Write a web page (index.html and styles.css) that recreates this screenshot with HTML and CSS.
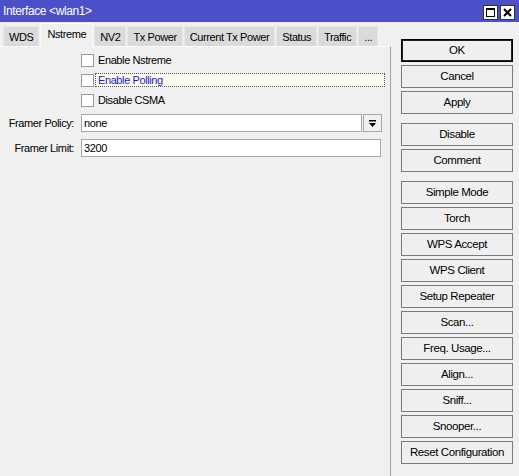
FILE: index.html
```html
<!DOCTYPE html>
<html>
<head>
<meta charset="utf-8">
<link rel="stylesheet" href="styles.css">
</head>
<body>
<div class="window">
  <div class="titlebar">
    <span class="title">Interface &lt;wlan1&gt;</span>
    <div class="winbtns">
      <span class="wbtn"><svg width="13" height="13" viewBox="0 0 13 13"><rect x="2.5" y="2.5" width="8" height="8" fill="none" stroke="#000" stroke-width="1"/><rect x="2" y="2" width="9" height="2" fill="#000"/></svg></span>
      <span class="wbtn"><svg width="13" height="13" viewBox="0 0 13 13"><path d="M3 3 L10 10 M10 3 L3 10" stroke="#000" stroke-width="2"/></svg></span>
    </div>
  </div>
  <div class="main">
    <div class="left">
      <div class="tabs">
        <span class="tab">WDS</span>
        <span class="tab active">Nstreme</span>
        <span class="tab">NV2</span>
        <span class="tab">Tx Power</span>
        <span class="tab">Current Tx Power</span>
        <span class="tab">Status</span>
        <span class="tab">Traffic</span>
        <span class="tab">...</span>
      </div>
      <div class="panel">
        <div class="checks">
          <div class="crow"><span class="cb"></span><span class="clabel">Enable Nstreme</span></div>
          <div class="crow"><span class="cb"></span><span class="clabel focus">Enable Polling</span></div>
          <div class="crow"><span class="cb"></span><span class="clabel">Disable CSMA</span></div>
        </div>
        <div class="fields">
          <div class="frow">
            <span class="flabel">Framer Policy:</span>
            <span class="input">none</span>
            <span class="dd"><svg width="9" height="9" viewBox="0 0 9 9"><rect x="1" y="1" width="7" height="1.5" fill="#000"/><path d="M1 4 H8 L4.5 8 Z" fill="#000"/></svg></span>
          </div>
          <div class="frow">
            <span class="flabel">Framer Limit:</span>
            <span class="input">3200</span>
          </div>
        </div>
      </div>
    </div>
    <div class="buttons">
      <div class="group">
        <span class="btn default">OK</span>
        <span class="btn">Cancel</span>
        <span class="btn">Apply</span>
      </div>
      <div class="group">
        <span class="btn">Disable</span>
        <span class="btn">Comment</span>
      </div>
      <div class="group">
        <span class="btn">Simple Mode</span>
        <span class="btn">Torch</span>
        <span class="btn">WPS Accept</span>
        <span class="btn">WPS Client</span>
        <span class="btn">Setup Repeater</span>
        <span class="btn">Scan...</span>
        <span class="btn">Freq. Usage...</span>
        <span class="btn">Align...</span>
        <span class="btn">Sniff...</span>
        <span class="btn">Snooper...</span>
        <span class="btn">Reset Configuration</span>
      </div>
    </div>
  </div>
</div>
</body>
</html>
```
FILE: styles.css
```css
* { box-sizing: border-box; }
html, body { margin: 0; padding: 0; }
body {
  font-family: "Liberation Sans", Arial, sans-serif;
  font-size: 11px;
  letter-spacing: -0.4px;
  color: #000;
  background: #f0f0f0;
}
.window {
  width: 519px;
  height: 476px;
  display: flex;
  flex-direction: column;
  background: #f0f0f0;
  overflow: hidden;
}
.titlebar {
  height: 22px;
  background: #4b4fc8;
  color: #fff;
  display: flex;
  align-items: center;
  justify-content: space-between;
  padding: 0 5px 0 3px;
  flex: none;
}
.title { font-size: 12px; line-height: 22px; letter-spacing: -0.4px; }
.winbtns { display: flex; gap: 4px; padding-top: 2px; }
.wbtn {
  width: 13px; height: 13px;
  background: #fff;
  outline: 1px solid #333;
  display: block;
}
.wbtn svg { display: block; }
.main { flex: 1; display: flex; min-height: 0; }
.left {
  width: 391px;
  display: flex;
  flex-direction: column;
}
.tabs {
  height: 24px;
  display: flex;
  align-items: flex-end;
  padding-left: 3px;
  gap: 1px;
  flex: none;
}
.tab {
  height: 20px;
  line-height: 20px;
  padding: 0 5px;
  background: #dadada;
  border: 1px solid #e6e6e6;
  border-bottom: none;
  white-space: nowrap;
}
.tab.active {
  height: 24px;
  line-height: 21px;
  padding: 0 6px;
  background: #f0f0f0;
  border-color: #fbfbfb;
  margin-bottom: -1px;
  position: relative;
}
.panel {
  flex: 1;
  border-top: 1px solid #fbfbfb;
  border-right: 1px solid #a0a0a0;
  padding-top: 3px;
}
.crow {
  height: 20px;
  display: flex;
  align-items: center;
  padding-left: 81px;
}
.cb {
  width: 13px; height: 13px;
  background: #fff;
  border: 1px solid #9a9a9a;
  flex: none;
}
.clabel {
  margin-left: 1px;
  padding: 0 2px;
  height: 14px;
  line-height: 12px;
  border: 1px solid transparent;
}
.clabel.focus {
  color: #1c1cc4;
  flex: 0 0 290px;
  border: 1px dotted #555;
  background: #fbfbf0;
}
.fields {
  margin-top: 4px;
  display: flex;
  flex-direction: column;
  gap: 7px;
}
.frow {
  display: flex;
  align-items: center;
  height: 18px;
}
.flabel {
  width: 81px;
  text-align: right;
  padding-right: 7px;
  flex: none;
  white-space: nowrap;
}
.input {
  flex: 0 0 300px;
  height: 18px;
  line-height: 16px;
  background: #fff;
  border: 1px solid #a8a8a8;
  padding-left: 2px;
}
.frow .input:not(:last-child) { flex-basis: 281px; }
.dd {
  margin-left: 1px;
  width: 19px; height: 18px;
  border: 1px solid #a8a8a8;
  background: #f0f0f0;
  display: flex;
  align-items: center;
  justify-content: center;
}
.dd svg { display: block; }
.buttons {
  margin-left: 10px;
  width: 112px;
  padding-top: 17px;
  display: flex;
  flex-direction: column;
  gap: 9px;
}
.group {
  display: flex;
  flex-direction: column;
  gap: 3px;
}
.btn {
  height: 23px;
  line-height: 21px;
  text-align: center;
  border: 1px solid #7a7a7a;
  background: #efefef;
  white-space: nowrap;
  font-size: 11.5px;
}
.btn.default {
  border: 1px solid #000;
  box-shadow: inset 0 0 0 1px #222;
}
```
